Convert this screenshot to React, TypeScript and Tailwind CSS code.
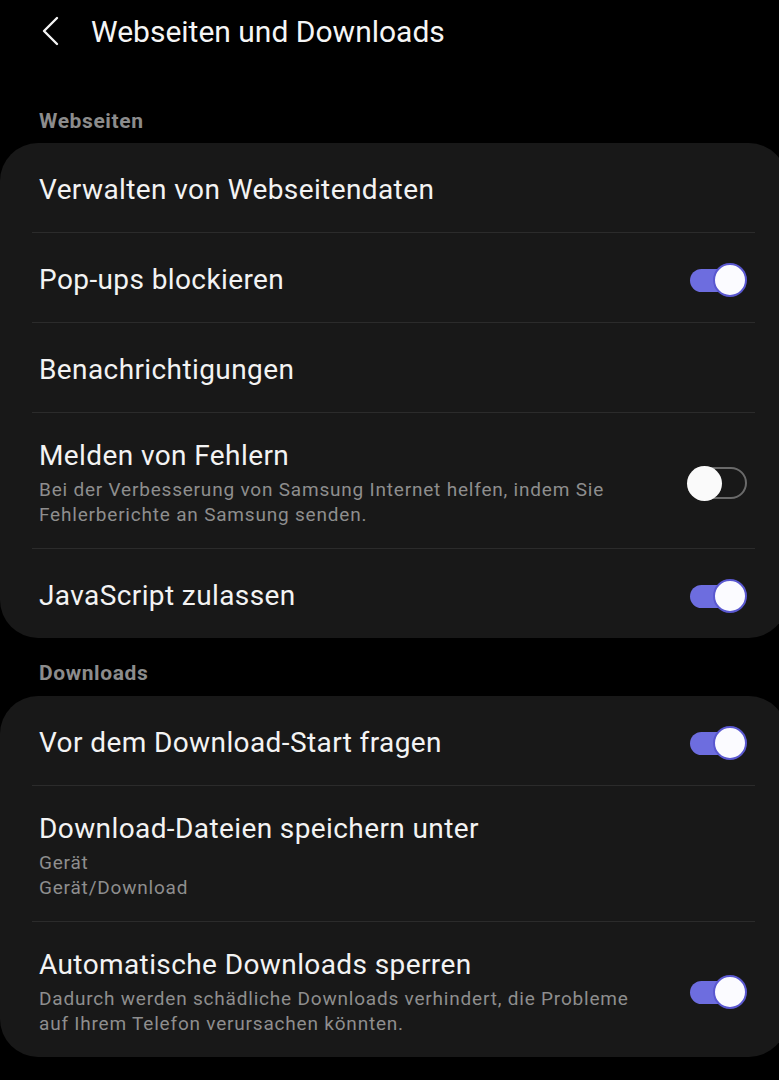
type Row = {
  title: string;
  sub?: string[];
  toggle?: "on" | "off";
};

const webseiten: Row[] = [
  { title: "Verwalten von Webseitendaten" },
  { title: "Pop-ups blockieren", toggle: "on" },
  { title: "Benachrichtigungen" },
  {
    title: "Melden von Fehlern",
    sub: ["Bei der Verbesserung von Samsung Internet helfen, indem Sie", "Fehlerberichte an Samsung senden."],
    toggle: "off",
  },
  { title: "JavaScript zulassen", toggle: "on" },
];

const downloads: Row[] = [
  { title: "Vor dem Download-Start fragen", toggle: "on" },
  { title: "Download-Dateien speichern unter", sub: ["Gerät", "Gerät/Download"] },
  {
    title: "Automatische Downloads sperren",
    sub: ["Dadurch werden schädliche Downloads verhindert, die Probleme", "auf Ihrem Telefon verursachen könnten."],
    toggle: "on",
  },
];

function Toggle({ on }: { on: boolean }) {
  if (on) {
    return (
      <div className="relative h-[34px] w-[58px] shrink-0">
        <div className="absolute left-[1px] top-[6px] h-[23px] w-[48px] rounded-full bg-[#6d6ddf]" />
        <div className="absolute right-0 top-0 h-[34px] w-[34px] rounded-full border-2 border-[#5a58d0] bg-[#fbfbff]" />
      </div>
    );
  }
  return (
    <div className="relative h-[34px] w-[60px] shrink-0">
      <div className="absolute inset-y-[1px] left-[2px] right-0 rounded-full border-2 border-[#6a6a6a]" />
      <div className="absolute left-0 top-0 h-[35px] w-[35px] rounded-full bg-[#fafafa]" />
    </div>
  );
}

function Card({ rows }: { rows: Row[] }) {
  return (
    <div className="mr-[-8px] rounded-[38px] bg-[#181818] px-[32px]">
      {rows.map((r, i) => (
        <div key={r.title}>
          {i > 0 && <div className="h-px bg-[#2b2b2b]" />}
          <div
            className={`flex items-center justify-between pl-[7px] pr-[8px] pt-[4px] ${r.sub ? "min-h-[135px]" : "h-[89px]"}`}
          >
            <div className="flex flex-col">
              <div className="text-[28px] leading-[34px] tracking-[0.4px] text-[#f3f3f3]">{r.title}</div>
              {r.sub && (
                <div className="mt-[4px] text-[19px] leading-[25px] tracking-[0.8px] text-[#8e8e8e]">
                  {r.sub.map((s) => (
                    <div key={s}>{s}</div>
                  ))}
                </div>
              )}
            </div>
            {r.toggle && <Toggle on={r.toggle === "on"} />}
          </div>
        </div>
      ))}
    </div>
  );
}

export default function App() {
  return (
    <div className="min-h-[1080px] w-[779px] overflow-hidden bg-black font-['Roboto',sans-serif]">
      <div className="flex h-[62px] items-center pl-[40px]">
        <svg width="20" height="30" viewBox="0 0 20 30">
          <path d="M17 2 L4 15 L17 28" fill="none" stroke="#f3f3f3" strokeWidth="2.4" strokeLinecap="round" strokeLinejoin="round" />
        </svg>
        <div className="ml-[31px] text-[30px] text-[#f5f5f5]">Webseiten und Downloads</div>
      </div>
      <div className="pb-[10px] pl-[39px] pt-[47px] text-[21px] font-bold leading-[24px] tracking-[0.6px] text-[#8c8c8c]">Webseiten</div>
      <Card rows={webseiten} />
      <div className="pb-[11px] pl-[39px] pt-[23px] text-[21px] font-bold leading-[24px] tracking-[0.6px] text-[#8c8c8c]">Downloads</div>
      <Card rows={downloads} />
    </div>
  );
}
